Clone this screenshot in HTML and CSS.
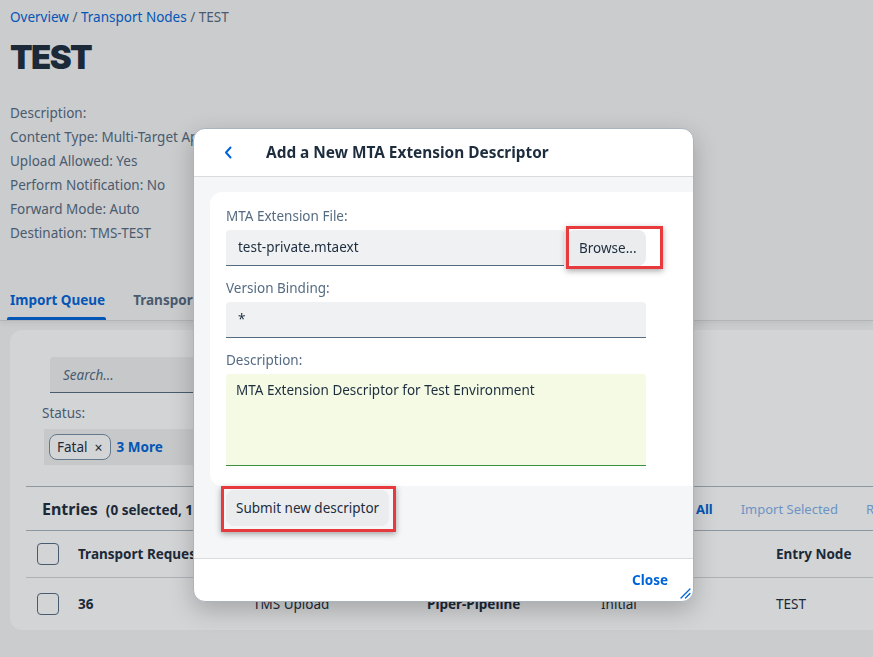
FILE: index.html
```html
<!DOCTYPE html>
<html lang="en">
<head>
<meta charset="utf-8">
<title>TEST</title>
<link rel="stylesheet" href="styles.css">
</head>
<body>
<div class="page">
  <nav class="crumbs"><a class="link">Overview</a> / <a class="link">Transport Nodes</a> / <span>TEST</span></nav>
  <h1 class="title">TEST</h1>
  <ul class="info">
    <li>Description:</li>
    <li>Content Type: Multi-Target Application</li>
    <li>Upload Allowed: Yes</li>
    <li>Perform Notification: No</li>
    <li>Forward Mode: Auto</li>
    <li>Destination: TMS-TEST</li>
  </ul>
  <div class="tabs">
    <div class="tab active">Import Queue</div>
    <div class="tab">Transport Actions</div>
  </div>
  <section class="panel">
    <div class="filters">
      <div class="search">Search...</div>
      <div class="status-label">Status:</div>
      <div class="tokenizer">
        <span class="token">Fatal <span class="token-x">×</span></span>
        <span class="more">3 More</span>
      </div>
    </div>
    <div class="table">
      <div class="tbar">
        <div class="tbar-left"><span class="entries">Entries</span><span class="count">(0 selected, 1 total)</span></div>
        <div class="actions-bar">
          <a class="act">Import All</a>
          <a class="act dis">Import Selected</a>
          <a class="act dis last">Remove</a>
        </div>
      </div>
      <div class="row head">
        <span class="cb"></span>
        <span>Transport Request</span>
        <span>Origin</span>
        <span>Description</span>
        <span>Status</span>
        <span>Entry Node</span>
      </div>
      <div class="row">
        <span class="cb"></span>
        <span class="b">36</span>
        <span>TMS Upload</span>
        <span class="b">Piper-Pipeline</span>
        <span>Initial</span>
        <span>TEST</span>
      </div>
    </div>
  </section>
</div>

<div class="overlay"></div>

<div class="dialog">
  <header class="dlg-head">
    <svg class="back" width="9" height="13" viewBox="0 0 9 13"><path d="M6.5 1.5 L2 6.5 L6.5 11.5" fill="none" stroke="#0064d9" stroke-width="2" stroke-linecap="round" stroke-linejoin="round"/></svg>
    <span class="dlg-title">Add a New MTA Extension Descriptor</span>
  </header>
  <div class="dlg-body">
    <div class="form-card">
      <label class="lbl">MTA Extension File:</label>
      <div class="file-row">
        <div class="input">test-private.mtaext</div>
        <div class="btn browse">Browse...</div>
        <span class="hl hl-browse"></span>
      </div>
      <label class="lbl lbl-gap">Version Binding:</label>
      <div class="input full">*</div>
      <label class="lbl lbl-gap">Description:</label>
      <div class="textarea">MTA Extension Descriptor for Test Environment</div>
    </div>
    <div class="form-actions">
      <div class="btn submit">Submit new descriptor</div>
      <span class="hl hl-submit"></span>
    </div>
  </div>
  <footer class="dlg-foot">
    <a class="close">Close</a>
  </footer>
  <svg class="resize" width="12" height="12" viewBox="0 0 12 12"><path d="M11 2 L2 11 M11 6.5 L6.5 11" stroke="#0064d9" stroke-width="1.3" stroke-linecap="round"/></svg>
</div>
</body>
</html>
```

FILE: styles.css
```css
* { box-sizing: border-box; margin: 0; padding: 0; }
html, body { height: 100%; }
body {
  font-family: "Noto Sans", "Liberation Sans", sans-serif;
  font-size: 13.5px;
  color: #1d2d3e;
  background: #f5f6f7;
  overflow: hidden;
  position: relative;
}
.page { padding: 7px 10px 0; }
.crumbs { line-height: 20px; font-size: 13.5px; color: #556b82; }
.link { color: #0064d9; text-decoration: none; }
.title {
  font-family: Inter, "Noto Sans", sans-serif;
  font-weight: 900;
  font-size: 33px;
  letter-spacing: -1.6px;
  line-height: 40px;
  margin-top: 10px;
  color: #1d2d3e;
}
.info { list-style: none; margin-top: 24px; color: #556b82; font-size: 13.5px; }
.info li { line-height: 24px; }

.tabs {
  display: flex;
  gap: 24px;
  margin: 35px -10px 0;
  padding-left: 7px;
  height: 41px;
  border-bottom: 1px solid #d6d9dc;
  box-shadow: 0 3px 6px rgba(0, 0, 0, 0.06);
}
.tab {
  position: relative;
  padding: 0 3px;
  line-height: 40px;
  font-weight: 700;
  font-size: 13.5px;
  color: #556b82;
}
.tab.active { color: #0064d9; padding: 0 1px 0 3px; }
.tab.active::after {
  content: "";
  position: absolute;
  left: 0; right: 0; bottom: 0;
  height: 3px;
  background: #0064d9;
  border-radius: 2px 2px 0 0;
}

.panel {
  margin-top: 9px;
  margin-right: -60px;
  height: 300px;
  background: #fff;
  border-radius: 12px;
  padding: 27px 0 0 16px;
}
.filters { padding-left: 16px; }
.search {
  margin-left: 8px;
  width: 600px;
  height: 36px;
  line-height: 36px;
  padding-left: 13px;
  background: #eff1f2;
  border-bottom: 1px solid #556b82;
  border-radius: 4px 4px 0 0;
  font-style: italic;
  color: #556b82;
}
.status-label { margin-top: 10px; line-height: 20px; color: #556b82; }
.tokenizer {
  margin-top: 6px;
  margin-left: 2px;
  width: 600px;
  height: 36px;
  background: #eff1f2;
  display: flex;
  align-items: center;
  gap: 6px;
  padding-left: 5px;
}
.token {
  display: flex;
  align-items: center;
  gap: 7px;
  height: 26px;
  padding: 0 7px;
  border: 1px solid #788fa6;
  border-radius: 8px;
  background: #fff;
  color: #1d2d3e;
}
.token-x { font-size: 14px; color: #1d2d3e; }
.more { color: #0064d9; font-weight: 700; }

.table { margin-top: 21px; }
.tbar {
  display: flex;
  align-items: center;
  height: 45px;
  border-top: 1px solid #a9b4be;
  border-bottom: 1px solid #a9b4be;
  padding-left: 16px;
}
.tbar-left { flex: none; width: 605px; display: flex; align-items: baseline; }
.entries { font-size: 16px; font-weight: 700; color: #1d2d3e; }
.count { margin-left: 8px; font-size: 13.5px; font-weight: 700; color: #1d2d3e; }
.actions-bar { flex: none; display: flex; white-space: nowrap; font-size: 13px; }
.act { color: #0064d9; font-weight: 700; margin-right: 28px; }
.act.dis { color: #7fb1ec; font-weight: 400; }
.act.last { margin-right: 0; }

.row {
  display: grid;
  grid-template-columns: 41px 175px 174px 174px 175px 1fr;
  align-items: center;
  padding-left: 11px;
  height: 52px;
  color: #1d2d3e;
  white-space: nowrap;
}
.row.head { height: 47px; border-bottom: 1px solid #d2d6da; font-weight: 700; }
.b { font-weight: 700; }
.cb {
  width: 22px;
  height: 22px;
  border: 1px solid #556b82;
  border-radius: 4px;
  background: #fff;
}

.overlay {
  position: fixed;
  inset: 0;
  background: rgba(20, 24, 30, 0.19);
}

.dialog {
  position: absolute;
  left: 193px;
  top: 128px;
  width: 501px;
  height: 474px;
  display: flex;
  flex-direction: column;
  background: #fff;
  border: 1px solid #aab4be;
  border-radius: 12px;
  box-shadow: 0 8px 24px rgba(0, 0, 0, 0.22);
  overflow: hidden;
}
.dlg-head {
  height: 48px;
  flex: none;
  display: flex;
  align-items: center;
  padding-left: 30px;
  border-bottom: 1px solid #d9dcdf;
}
.back { margin-right: 33px; }
.dlg-title { font-weight: 700; font-size: 15.4px; color: #1d2d3e; }

.dlg-body {
  flex: 1;
  background: #f5f6f7;
  padding: 15px 0 0 16px;
}
.form-card {
  background: #fff;
  border-radius: 12px 0 0 12px;
  padding: 14px 47px 20px 16px;
}
.lbl { display: block; line-height: 20px; color: #556b82; font-size: 13.5px; }
.lbl-gap { margin-top: 12px; }
.file-row { position: relative; display: flex; gap: 3px; margin-top: 4px; }
.input {
  flex: 1;
  height: 36px;
  line-height: 35px;
  padding-left: 12px;
  background: #eff1f2;
  border-bottom: 1px solid #556b82;
  border-radius: 4px 4px 0 0;
  color: #1d2d3e;
}
.input.full { margin-top: 4px; }
.textarea {
  margin-top: 4px;
  height: 92px;
  padding: 6px 10px;
  line-height: 20px;
  background: #f5fae5;
  border-bottom: 1px solid #3c8f40;
  border-radius: 4px 4px 0 0;
  color: #1d2d3e;
}
.btn {
  height: 36px;
  line-height: 36px;
  padding: 0 11px;
  background: #eaecee;
  border-radius: 8px;
  color: #1d2d3e;
  white-space: nowrap;
}
.browse { width: 79px; padding: 0 0 0 12px; }
.form-actions { position: relative; padding: 4px 0 0 16px; display: flex; }
.submit { padding: 0 10px; }
.hl {
  position: absolute;
  border: 3px solid #e8393d;
  box-shadow: 0 2px 6px rgba(0, 0, 0, 0.35);
  pointer-events: none;
}
.hl-browse { left: 340px; top: -4px; width: 97px; height: 43px; }
.hl-submit { left: 11px; top: 0; width: 175px; height: 46px; }

.dlg-foot {
  height: 43px;
  flex: none;
  border-top: 1px solid #d9dcdf;
  display: flex;
  align-items: center;
  justify-content: flex-end;
  padding-right: 25px;
}
.close { color: #0064d9; font-weight: 700; font-size: 13.5px; }
.resize { position: absolute; right: 2px; bottom: 2px; }
```
